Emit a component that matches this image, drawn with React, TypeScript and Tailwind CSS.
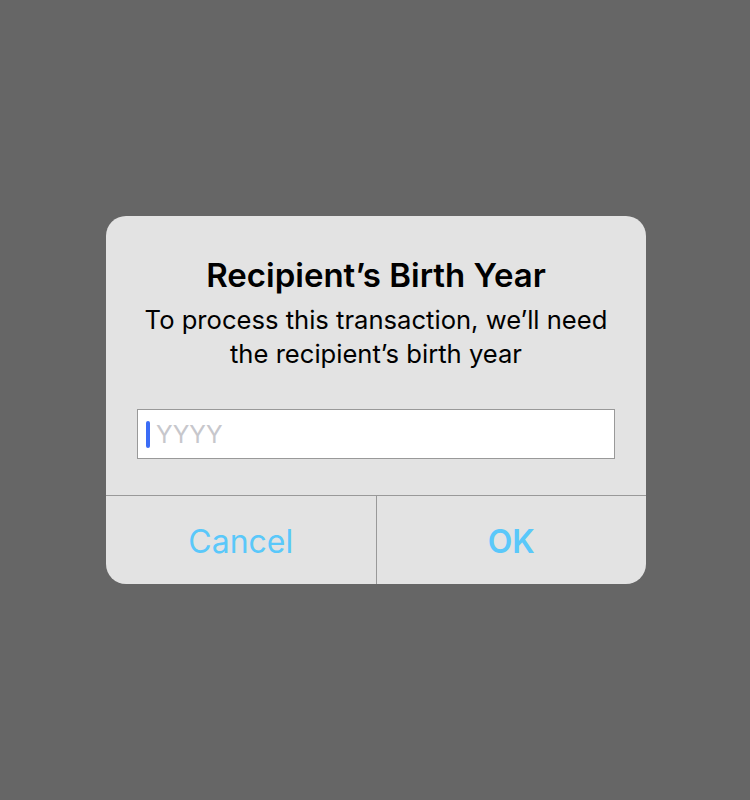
import React from "react";

const App = () => {
    return (
        <div className="flex h-[800px] w-[750px] items-center justify-center bg-[#666666] pl-[2px]" style={{ fontFamily: "Inter, 'Noto Sans', sans-serif" }}>
            <div className="flex w-[540px] flex-col overflow-hidden rounded-[20px] bg-[#e3e3e3]">
                <div className="flex flex-col items-center px-[20px] pt-[40px] pb-[36px]">
                    <h2 className="text-[33px] leading-[38px] font-semibold text-black">Recipient’s Birth Year</h2>
                    <p className="mt-[9px] text-center text-[25.6px] leading-[34px] text-black">
                        To process this transaction, we’ll need
                        <br />
                        the recipient’s birth year
                    </p>
                    <div className="mt-[38px] flex h-[50px] w-[478px] items-center border border-[#999999] bg-white pl-[8px]">
                        <div className="h-[27px] w-[4px] rounded-full bg-[#3b6cf6]"></div>
                        <span className="ml-[6px] text-[24.5px] text-[#c7c7cc]">YYYY</span>
                    </div>
                </div>
                <div className="flex h-[89px] border-t border-[#999999]">
                    <button className="flex flex-1 items-center justify-center pt-[4px] text-[32px] text-[#5ac8fa]">Cancel</button>
                    <div className="w-px bg-[#999999]"></div>
                    <button className="flex flex-1 items-center justify-center pt-[4px] text-[32px] font-semibold text-[#5ac8fa]">OK</button>
                </div>
            </div>
        </div>
    );
};

export default App;
